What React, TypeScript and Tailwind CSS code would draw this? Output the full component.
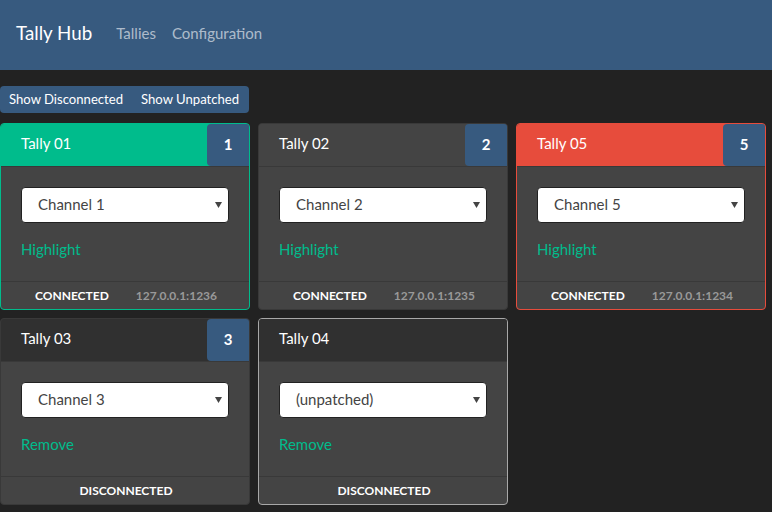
import { ChangeEvent, useState } from 'react'

type Tally = {
  name: string
  channel: string
  badge?: string
  state: 'program' | 'preview' | 'idle' | 'off'
  connected: boolean
  address?: string
  selected?: boolean
}

const tallies: Tally[] = [
  { name: 'Tally 01', channel: 'Channel 1', badge: '1', state: 'preview', connected: true, address: '127.0.0.1:1236' },
  { name: 'Tally 02', channel: 'Channel 2', badge: '2', state: 'idle', connected: true, address: '127.0.0.1:1235' },
  { name: 'Tally 05', channel: 'Channel 5', badge: '5', state: 'program', connected: true, address: '127.0.0.1:1234' },
  { name: 'Tally 03', channel: 'Channel 3', badge: '3', state: 'off', connected: false },
  { name: 'Tally 04', channel: '(unpatched)', state: 'off', connected: false, selected: true },
]

const channels = ['(unpatched)', 'Channel 1', 'Channel 2', 'Channel 3', 'Channel 4', 'Channel 5']

function TallyCard({ tally }: { tally: Tally }) {
  const [channel, setChannel] = useState(tally.channel)

  const border =
    tally.state === 'preview'
      ? 'border-[#00bc8c]'
      : tally.state === 'program'
        ? 'border-[#e74c3c]'
        : tally.selected
          ? 'border-[#a8a8a8]'
          : 'border-[#393939]'

  const header =
    tally.state === 'preview'
      ? 'bg-[#00bc8c]'
      : tally.state === 'program'
        ? 'bg-[#e74c3c]'
        : tally.state === 'idle'
          ? 'bg-[#444444]'
          : 'bg-[#303030]'

  return (
    <div className={`w-[250px] h-[187px] flex flex-col rounded border bg-[#444444] overflow-hidden ${border}`}>
      <div className={`h-[43px] shrink-0 flex items-stretch border-b border-[#393939] ${header}`}>
        <div className="flex-1 flex items-center pl-5 pb-[3px] text-white text-[15px]">{tally.name}</div>
        {tally.badge && (
          <div className="w-[42px] flex items-center justify-center pb-[2px] bg-[#375a7f] text-white font-bold text-[15px] rounded-l">
            {tally.badge}
          </div>
        )}
      </div>
      <div className="flex-1 flex flex-col px-5 pt-5">
        <div className="relative h-9">
          <select
            value={channel}
            onChange={(e: ChangeEvent<HTMLSelectElement>) => setChannel(e.target.value)}
            className="w-full h-9 appearance-none rounded border border-[#222] bg-white pl-4 pb-[2px] text-[15px] text-[#444] outline-none"
          >
            {channels.map(c => (
              <option key={c} value={c}>{c}</option>
            ))}
          </select>
          <svg className="pointer-events-none absolute right-[7px] top-[15px]" width="7" height="6" viewBox="0 0 7 6">
            <path d="M0 0h7L3.5 6z" fill="#444" />
          </svg>
        </div>
        <a href="#" className="mt-[14px] leading-6 text-[15px] text-[#00bc8c]">
          {tally.connected ? 'Highlight' : 'Remove'}
        </a>
      </div>
      <div className="h-[28px] shrink-0 flex items-center justify-center gap-[27px] pl-[2px] border-t border-[#393939] text-xs font-bold">
        <span className="text-white">{tally.connected ? 'CONNECTED' : 'DISCONNECTED'}</span>
        {tally.address && <span className="text-[#999]">{tally.address}</span>}
      </div>
    </div>
  )
}

export default function App() {
  return (
    <div className="min-h-screen bg-[#222222] font-['Lato','Liberation_Sans',sans-serif]">
      <nav className="h-[70px] bg-[#375a7f] flex items-center px-4 pb-[3px]">
        <span className="text-white text-[18.75px] mr-6">Tally Hub</span>
        <div className="flex gap-4 text-[15px] text-white/60">
          <a href="#">Tallies</a>
          <a href="#">Configuration</a>
        </div>
      </nav>
      <div className="mt-4 inline-flex h-[27px] rounded bg-[#375a7f] text-[13.125px] text-white">
        <button className="px-[9px]">Show Disconnected</button>
        <button className="pl-[9px] pr-[10px]">Show Unpatched</button>
      </div>
      <div className="mt-[10px] flex flex-wrap gap-2 w-[772px]">
        {tallies.map(t => (
          <TallyCard key={t.name} tally={t} />
        ))}
      </div>
    </div>
  )
}
